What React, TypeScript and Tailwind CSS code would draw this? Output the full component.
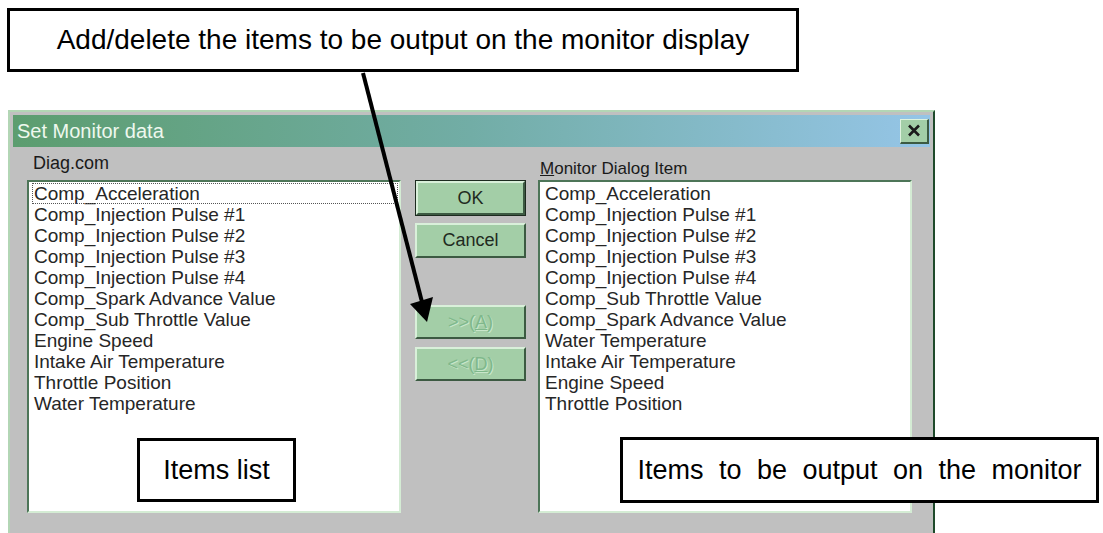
const leftItems = [
  "Comp_Acceleration",
  "Comp_Injection Pulse #1",
  "Comp_Injection Pulse #2",
  "Comp_Injection Pulse #3",
  "Comp_Injection Pulse #4",
  "Comp_Spark Advance Value",
  "Comp_Sub Throttle Value",
  "Engine Speed",
  "Intake Air Temperature",
  "Throttle Position",
  "Water Temperature",
];

const rightItems = [
  "Comp_Acceleration",
  "Comp_Injection Pulse #1",
  "Comp_Injection Pulse #2",
  "Comp_Injection Pulse #3",
  "Comp_Injection Pulse #4",
  "Comp_Sub Throttle Value",
  "Comp_Spark Advance Value",
  "Water Temperature",
  "Intake Air Temperature",
  "Engine Speed",
  "Throttle Position",
];

function ListBox({ items, focused }: { items: string[]; focused?: boolean }) {
  return (
    <div className="h-[333px] w-[374px] border-t-2 border-l-2 border-b-2 border-r-2 border-t-[#4d7558] border-l-[#4d7558] border-b-[#d4ecd4] border-r-[#d4ecd4] bg-white pt-[1px] pl-[3px] pr-[1px]">
      {items.map((item, i) => (
        <div
          key={item}
          className={
            "h-[21px] pl-[2px] text-[19px] leading-[21px] whitespace-nowrap text-[#262626] " +
            (focused && i === 0 ? "outline-1 outline-dotted outline-[#555] -outline-offset-1" : "")
          }
        >
          {item}
        </div>
      ))}
    </div>
  );
}

function DlgButton({
  children,
  isDefault,
  disabled,
  className,
}: {
  children: React.ReactNode;
  isDefault?: boolean;
  disabled?: boolean;
  className?: string;
}) {
  return (
    <div className={(isDefault ? "border border-[#1d2b20] " : "") + "w-[111px] " + (className ?? "")}>
      <div
        className={
          "flex h-full w-full items-center justify-center border-t-2 border-l-2 border-b-2 border-r-2 border-t-[#d9f0da] border-l-[#d9f0da] border-b-[#3c5a42] border-r-[#3c5a42] bg-[#a3cea7] text-[18px] " +
          (disabled ? "text-[#7fb88b] [text-shadow:1px_1px_0_#c8e6ca]" : "text-[#1f2a21]")
        }
      >
        {children}
      </div>
    </div>
  );
}

export default function App() {
  return (
    <div className="relative h-[533px] w-[1103px] overflow-hidden bg-white font-['Liberation_Sans',Arial,sans-serif]">
      {/* top callout */}
      <div className="ml-[7px] mt-[8px] flex h-[64px] w-[792px] items-center justify-center border-[3px] border-black text-[28px] text-black">
        Add/delete the items to be output on the monitor display
      </div>

      {/* dialog */}
      <div className="ml-[8px] mt-[38px] h-[430px] w-[927px] border-t-2 border-l-2 border-r-2 border-t-[#b3d6b5] border-l-[#b3d6b5] border-r-[#1e4a2b] bg-[#c0c0c0] p-[3px]">
        <div className="flex h-[32px] items-center justify-between bg-gradient-to-r from-[#5c9d6f] via-[#72ada6] to-[#95c5e7] pl-[4px] pr-[1px]">
          <span className="text-[20px] text-[#eef8ee]">Set Monitor data</span>
          <div className="flex h-[25px] w-[29px] items-center justify-center border-t border-l border-b-2 border-r-2 border-t-[#dff3df] border-l-[#dff3df] border-b-[#3c5a42] border-r-[#3c5a42] bg-[#a3cea7]">
            <svg width="14" height="13" viewBox="0 0 14 13">
              <path d="M2 1.5 L12 11.5 M12 1.5 L2 11.5" stroke="#1b1b1b" strokeWidth="2.6" />
            </svg>
          </div>
        </div>

        <div className="flex pl-[14px]">
          <div className="flex flex-col">
            <div className="h-[33px] pl-[6px] pt-[6px] text-[18px] leading-[20px] text-[#1a1a1a]">Diag.com</div>
            <ListBox items={leftItems} focused />
          </div>

          <div className="ml-[14px] flex flex-col pt-[33px]">
            <DlgButton isDefault className="h-[36px]">OK</DlgButton>
            <DlgButton className="mt-[7px] h-[35px]">Cancel</DlgButton>
            <DlgButton disabled className="mt-[47px] h-[34px]">
              <span>
                &gt;&gt;(<span className="underline">A</span>)
              </span>
            </DlgButton>
            <DlgButton disabled className="mt-[8px] h-[34px]">
              <span>
                &lt;&lt;(<span className="underline">D</span>)
              </span>
            </DlgButton>
          </div>

          <div className="ml-[12px] flex flex-col">
            <div className="h-[33px] pl-[2px] pt-[12px] text-[17px] leading-[20px] text-[#1a1a1a]">
              <span className="underline">M</span>onitor Dialog Item
            </div>
            <ListBox items={rightItems} />
          </div>
        </div>
      </div>

      {/* overlay callouts */}
      <div className="absolute left-[137px] top-[438px] flex h-[64px] w-[159px] items-center justify-center border-[3px] border-black bg-white text-[27px] text-black">
        Items list
      </div>
      <div className="absolute left-[620px] top-[437px] flex h-[66px] w-[479px] items-center justify-center border-[3px] border-black bg-white text-[27px] text-black [word-spacing:8px]">
        Items to be output on the monitor
      </div>

      {/* arrow */}
      <svg className="pointer-events-none absolute left-0 top-0" width="1103" height="533">
        <line x1="363" y1="73" x2="422" y2="302" stroke="black" strokeWidth="4" />
        <polygon points="427,322 433,297 410,304" fill="black" />
      </svg>
    </div>
  );
}
